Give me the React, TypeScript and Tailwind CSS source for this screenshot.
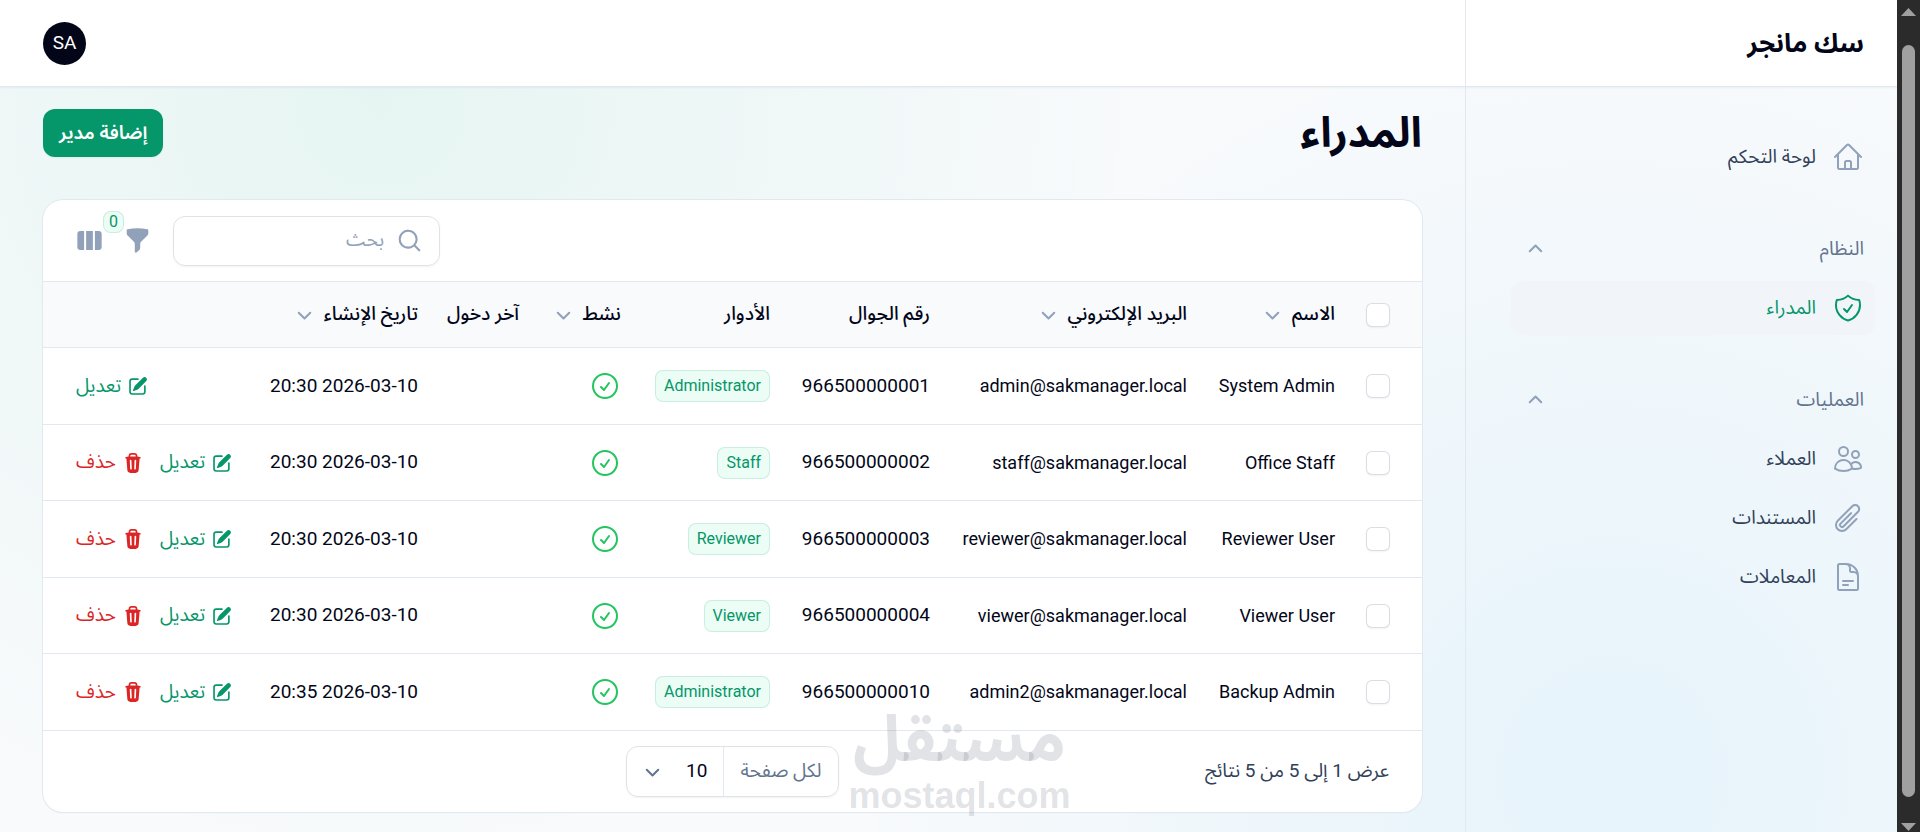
import { useState } from 'react'
import {
  HiOutlineCheckCircle,
  HiOutlineDocumentText,
  HiOutlineHome,
  HiOutlinePaperClip,
  HiOutlineShieldCheck,
  HiOutlineUsers,
} from 'react-icons/hi2'
import clsx from 'clsx'

interface NavItem {
  id: string
  label: string
  icon: any
}

interface NavGroup {
  label?: string
  items: NavItem[]
}

const navGroups: NavGroup[] = [
  { items: [{ id: 'dashboard', label: 'لوحة التحكم', icon: HiOutlineHome }] },
  { label: 'النظام', items: [{ id: 'admins', label: 'المدراء', icon: HiOutlineShieldCheck }] },
  {
    label: 'العمليات',
    items: [
      { id: 'clients', label: 'العملاء', icon: HiOutlineUsers },
      { id: 'documents', label: 'المستندات', icon: HiOutlinePaperClip },
      { id: 'transactions', label: 'المعاملات', icon: HiOutlineDocumentText },
    ],
  },
]

const columns = [
  { label: 'الاسم', sortable: true, width: 'w-[148px]' },
  { label: 'البريد الإلكتروني', sortable: true, width: 'w-[257px]' },
  { label: 'رقم الجوال', width: 'w-[160px]' },
  { label: 'الأدوار', width: 'w-[149px]' },
  { label: 'نشط', sortable: true, width: 'w-[102px]' },
  { label: 'آخر دخول', width: 'w-[101px]' },
  { label: 'تاريخ الإنشاء', sortable: true, width: 'w-[184px]' },
]

const admins = [
  { name: 'System Admin', email: 'admin@sakmanager.local', phone: '966500000001', role: 'Administrator', created: '2026-03-10 20:30', locked: true },
  { name: 'Office Staff', email: 'staff@sakmanager.local', phone: '966500000002', role: 'Staff', created: '2026-03-10 20:30' },
  { name: 'Reviewer User', email: 'reviewer@sakmanager.local', phone: '966500000003', role: 'Reviewer', created: '2026-03-10 20:30' },
  { name: 'Viewer User', email: 'viewer@sakmanager.local', phone: '966500000004', role: 'Viewer', created: '2026-03-10 20:30' },
  { name: 'Backup Admin', email: 'admin2@sakmanager.local', phone: '966500000010', role: 'Administrator', created: '2026-03-10 20:35' },
]

// 20px solid icons
const miniIcons = {
  chevronDown:
    'M5.22 8.22a.75.75 0 0 1 1.06 0L10 11.94l3.72-3.72a.75.75 0 1 1 1.06 1.06l-4.25 4.25a.75.75 0 0 1-1.06 0L5.22 9.28a.75.75 0 0 1 0-1.06Z',
  search:
    'M9 3.5a5.5 5.5 0 1 0 0 11 5.5 5.5 0 0 0 0-11ZM2 9a7 7 0 1 1 12.452 4.391l3.328 3.329a.75.75 0 1 1-1.06 1.06l-3.329-3.328A7 7 0 0 1 2 9Z',
  funnel:
    'M2.628 1.601C5.028 1.206 7.49 1 10 1s4.973.206 7.372.601a.75.75 0 0 1 .628.74v2.288a2.25 2.25 0 0 1-.659 1.59l-4.682 4.683a2.25 2.25 0 0 0-.659 1.59v3.037c0 .684-.31 1.33-.844 1.757l-1.937 1.55A.75.75 0 0 1 8 18.25v-5.757a2.25 2.25 0 0 0-.659-1.591L2.659 6.22A2.25 2.25 0 0 1 2 4.629V2.34a.75.75 0 0 1 .628-.74Z',
  columns:
    'M14 17h2.75A2.25 2.25 0 0 0 19 14.75v-9.5A2.25 2.25 0 0 0 16.75 3H14v14ZM12.5 3h-5v14h5V3ZM3.25 3H6v14H3.25A2.25 2.25 0 0 1 1 14.75v-9.5A2.25 2.25 0 0 1 3.25 3Z',
  pencil:
    'm5.433 13.917 1.262-3.155A4 4 0 0 1 7.58 9.42l6.92-6.918a2.121 2.121 0 0 1 3 3l-6.92 6.918c-.383.383-.84.685-1.343.886l-3.154 1.262a.5.5 0 0 1-.65-.65ZM3.5 5.75c0-.69.56-1.25 1.25-1.25H10A.75.75 0 0 0 10 3H4.75A2.75 2.75 0 0 0 2 5.75v9.5A2.75 2.75 0 0 0 4.75 18h9.5A2.75 2.75 0 0 0 17 15.25V10a.75.75 0 0 0-1.5 0v5.25c0 .69-.56 1.25-1.25 1.25h-9.5c-.69 0-1.25-.56-1.25-1.25v-9.5Z',
  trash:
    'M8.75 1A2.75 2.75 0 0 0 6 3.75v.443c-.795.077-1.584.176-2.365.298a.75.75 0 1 0 .23 1.482l.149-.022.841 10.518A2.75 2.75 0 0 0 7.596 19h4.807a2.75 2.75 0 0 0 2.742-2.53l.841-10.52.149.023a.75.75 0 0 0 .23-1.482A41.03 41.03 0 0 0 14 4.193V3.75A2.75 2.75 0 0 0 11.25 1h-2.5ZM10 4c.84 0 1.673.025 2.5.075V3.75c0-.69-.56-1.25-1.25-1.25h-2.5c-.69 0-1.25.56-1.25 1.25v.325C8.327 4.025 9.16 4 10 4ZM8.58 7.72a.75.75 0 0 0-1.5.06l.3 7.5a.75.75 0 1 0 1.5-.06l-.3-7.5Zm4.34.06a.75.75 0 1 0-1.5-.06l-.3 7.5a.75.75 0 1 0 1.5.06l.3-7.5Z',
}

function MiniIcon({ name, className }: { name: keyof typeof miniIcons; className?: string }) {
  return (
    <svg viewBox="0 0 20 20" fill="currentColor" aria-hidden="true" className={clsx('shrink-0', className)}>
      <path fillRule="evenodd" clipRule="evenodd" d={miniIcons[name]} />
    </svg>
  )
}

function Checkbox({ label }: { label: string }) {
  return (
    <input
      type="checkbox"
      aria-label={label}
      className="block size-6 appearance-none rounded-md border border-gray-300/80 bg-white shadow-xs checked:bg-[#059669]"
    />
  )
}

function Sidebar() {
  const [active, setActive] = useState('admins')

  return (
    <aside className="w-[432px] shrink-0 border-l border-slate-200 pt-[43px] pr-[22px] pl-[45px]">
      <nav className="flex flex-col gap-[38px]">
        {navGroups.map((group, index) => (
          <div key={index} className="flex flex-col gap-[5px]">
            {group.label && (
              <button className="flex h-[54px] items-center justify-between px-[11px] text-slate-500">
                <span>{group.label}</span>
                <MiniIcon name="chevronDown" className="size-[27px] rotate-180 text-slate-400" />
              </button>
            )}
            {group.items.map((item) => (
              <a
                key={item.id}
                href={'#' + item.id}
                onClick={() => setActive(item.id)}
                className={clsx(
                  'flex h-[54px] items-center gap-4 rounded-xl px-[11px]',
                  active === item.id ? 'bg-slate-100 text-[#059669]' : 'text-slate-700',
                )}
              >
                <item.icon className={clsx('size-8', active === item.id ? 'text-[#059669]' : 'text-slate-400')} />
                <span>{item.label}</span>
              </a>
            ))}
          </div>
        ))}
      </nav>
    </aside>
  )
}

function AdminsTable() {
  return (
    <table className="w-full table-fixed text-right">
      <thead>
        <tr className="h-[66px] border-y border-slate-200 bg-slate-50">
          <th className="w-[71px] pr-8">
            <Checkbox label="تحديد الكل" />
          </th>
          {columns.map((column) => (
            <th key={column.label} className={clsx('px-4 font-medium whitespace-nowrap', column.width)}>
              {column.sortable ? (
                <button className="flex items-center gap-1.5">
                  {column.label}
                  <MiniIcon name="chevronDown" className="size-[27px] text-slate-400" />
                </button>
              ) : (
                column.label
              )}
            </th>
          ))}
          <th aria-label="الإجراءات" />
        </tr>
      </thead>
      <tbody>
        {admins.map((admin) => (
          <tr key={admin.email} className="h-[76px] border-b border-slate-200 whitespace-nowrap odd:h-[77px]">
            <td className="pr-8">
              <Checkbox label={admin.name} />
            </td>
            <td className="px-4 text-lg">{admin.name}</td>
            <td className="px-4 text-lg">{admin.email}</td>
            <td className="px-4">{admin.phone}</td>
            <td className="px-4">
              <span className="inline-flex h-8 items-center rounded-lg border border-[#059669]/15 bg-emerald-50 px-2 text-base text-[#059669]">
                {admin.role}
              </span>
            </td>
            <td className="px-4">
              <HiOutlineCheckCircle className="size-8 text-[#22c55e]" />
            </td>
            <td />
            <td className="px-4">{admin.created}</td>
            <td className="pl-[33px]">
              <div className="flex justify-end gap-4">
                <a href="#edit" className="flex items-center gap-1.5 text-[#059669]">
                  <MiniIcon name="pencil" className="size-[22px]" />
                  تعديل
                </a>
                {!admin.locked && (
                  <button className="flex items-center gap-1.5 text-[#dc2626]">
                    <MiniIcon name="trash" className="size-[22px]" />
                    حذف
                  </button>
                )}
              </div>
            </td>
          </tr>
        ))}
      </tbody>
    </table>
  )
}

export default function App() {
  return (
    <div
      dir="ltr"
      className="flex h-screen overflow-hidden bg-slate-50 font-[Roboto,'Noto_Sans_Arabic','DejaVu_Sans',sans-serif] text-[19px] text-slate-950"
    >
      <div
        dir="rtl"
        className="flex min-w-0 flex-1 flex-col bg-[radial-gradient(circle_at_20%_12%,rgb(16_185_129/0.08),transparent_760px),radial-gradient(circle_at_85%_93%,rgb(14_165_233/0.08),transparent_760px)]"
      >
        {/* Top bar */}
        <header className="flex h-[87px] shrink-0 border-b border-slate-200 bg-white shadow-xs">
          <div className="flex w-[432px] items-center border-l border-slate-200 px-[33px]">
            <a href="#home" className="text-[26px] font-bold">
              سك مانجر
            </a>
          </div>
          <div className="flex flex-1 items-center justify-end px-[43px]">
            <button className="size-[43px] rounded-full bg-slate-950 text-white">SA</button>
          </div>
        </header>

        <div className="flex min-h-0 flex-1">
          <Sidebar />

          <main className="flex min-w-0 flex-1 flex-col px-[43px] pt-[22px]">
            <div className="flex h-12 items-center justify-between">
              <h1 className="text-[42px] leading-12 font-bold">المدراء</h1>
              <button className="h-12 rounded-xl bg-[#059669] px-4 font-semibold text-white shadow-xs">إضافة مدير</button>
            </div>

            <section className="mt-[43px] rounded-[20px] bg-white shadow-xs ring-1 ring-slate-200">
              {/* Toolbar */}
              <div className="flex h-[81px] items-center justify-end px-[33px]">
                <label className="flex h-[50px] w-[267px] items-center gap-3 rounded-xl border border-gray-300/70 px-4 shadow-xs">
                  <MiniIcon name="search" className="size-[27px] text-slate-400" />
                  <input type="search" placeholder="بحث" aria-label="بحث" className="w-full min-w-0 outline-none placeholder:text-slate-400" />
                </label>
                <button className="relative mr-[22px] text-slate-400" aria-label="تصفية">
                  <MiniIcon name="funnel" className="size-[27px]" />
                  <span className="absolute -top-4 right-full flex h-[22px] w-[21px] items-center justify-center rounded-lg border border-[#059669]/15 bg-emerald-50 text-base text-[#059669]">
                    0
                  </span>
                </button>
                <button className="mr-[21px] text-slate-400" aria-label="الأعمدة">
                  <MiniIcon name="columns" className="size-[27px]" />
                </button>
              </div>

              <AdminsTable />

              {/* Pagination */}
              <div className="relative grid h-[81px] grid-cols-3 items-center px-[33px]">
                <span className="text-slate-700">عرض 1 إلى 5 من 5 نتائج</span>
                <label className="flex h-[51px] items-center justify-self-center rounded-xl border border-gray-300/70 shadow-xs">
                  <span className="flex h-full items-center border-l border-slate-200 px-4 text-slate-500">لكل صفحة</span>
                  <span className="relative flex h-full items-center">
                    <select className="h-full w-24 appearance-none bg-transparent pr-4 outline-none" defaultValue="10">
                      <option>10</option>
                      <option>25</option>
                      <option>50</option>
                    </select>
                    <MiniIcon name="chevronDown" className="pointer-events-none absolute left-3 size-[27px] text-slate-500" />
                  </span>
                </label>
                <div dir="ltr" className="pointer-events-none absolute -bottom-0.5 left-[808px] flex w-[217px] flex-col items-center font-bold text-gray-500/20">
                  <span className="text-[64px] leading-[76px]">مستقل</span>
                  <span className="font-['Liberation_Sans',sans-serif] text-[36px] leading-9">mostaql.com</span>
                </div>
              </div>
            </section>
          </main>
        </div>
      </div>

      {/* Scrollbar */}
      <div className="flex w-[23px] shrink-0 flex-col items-center justify-between bg-[#2b2b2b] pt-2 pb-px">
        <svg viewBox="0 0 15 8" className="h-2 w-[15px] fill-[#a0a0a0]">
          <path d="M7.5 0 15 8H0z" />
        </svg>
        <div className="mt-[29px] mb-[26px] w-[13px] flex-1 rounded-full bg-[#a0a0a0]" />
        <svg viewBox="0 0 15 8" className="h-2 w-[15px] fill-[#a0a0a0]">
          <path d="M0 0h15L7.5 8z" />
        </svg>
      </div>
    </div>
  )
}
